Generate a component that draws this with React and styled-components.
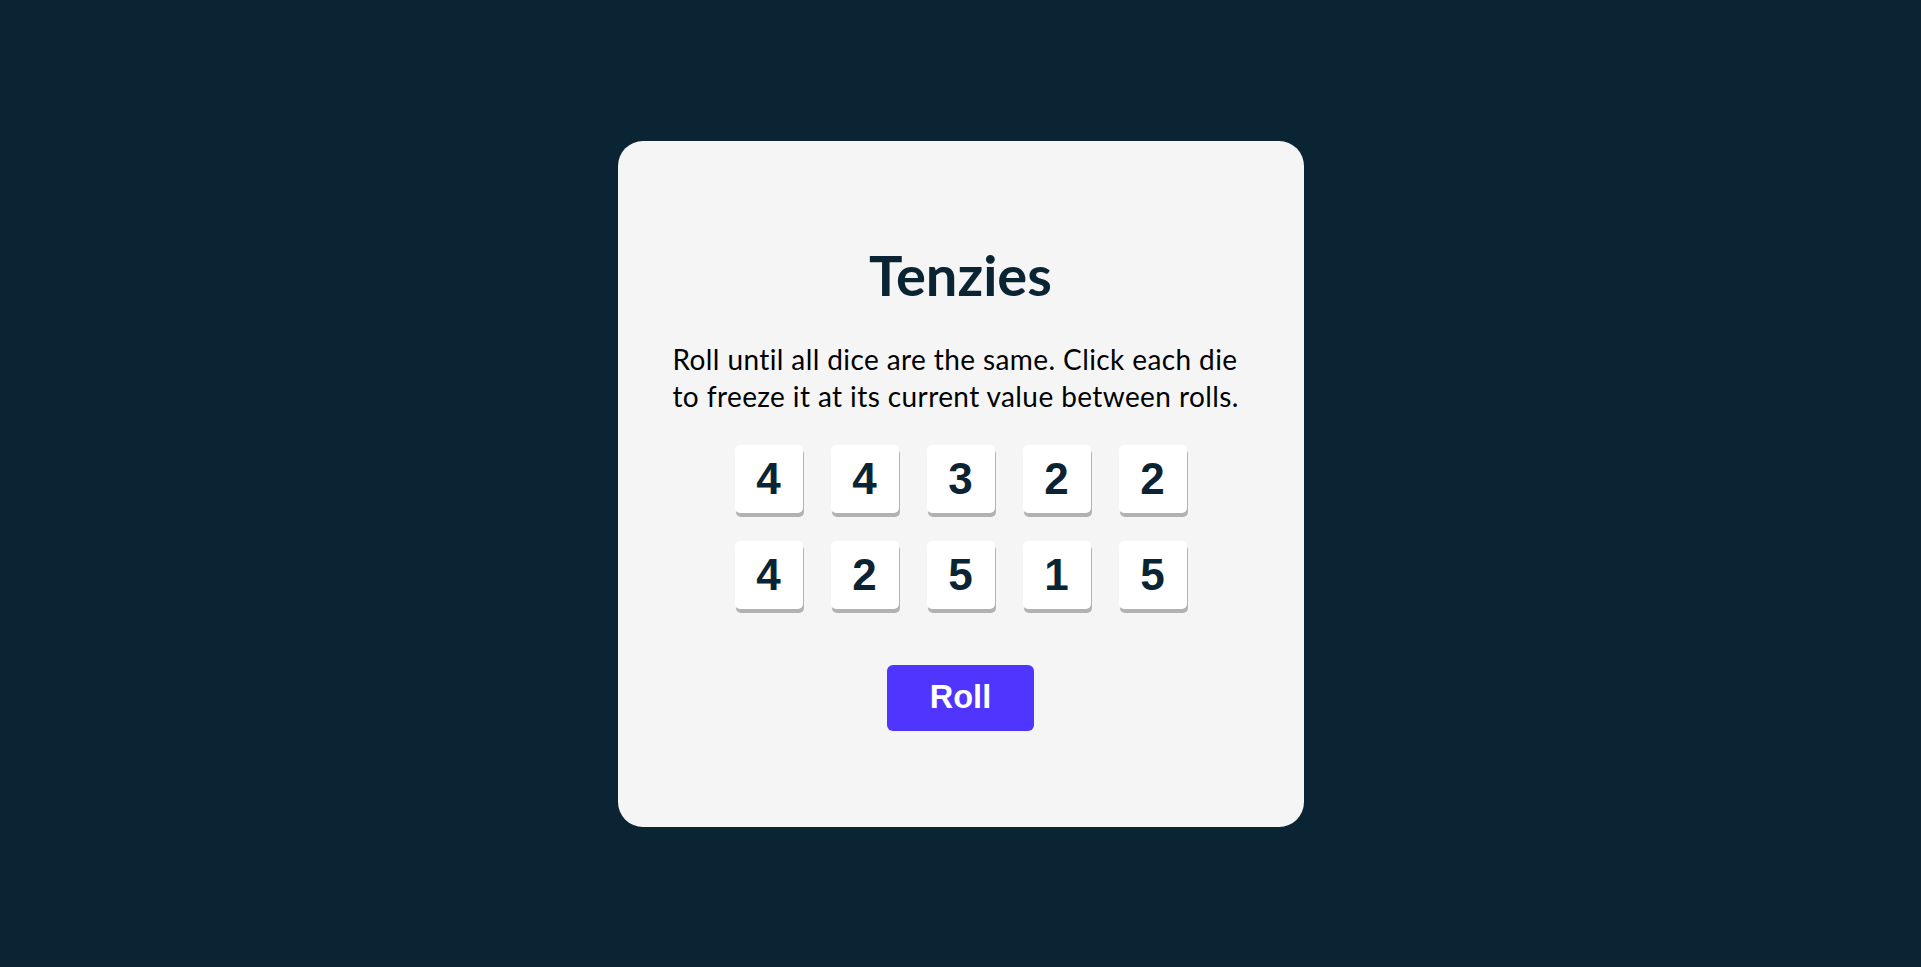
import React, { useState } from "react";
import styled, { createGlobalStyle } from "styled-components";

const GlobalStyle = createGlobalStyle`
  * { box-sizing: border-box; }
  body {
    margin: 0;
    background: #0b2434;
    font-family: "Lato", "Liberation Sans", sans-serif;
  }
`;

const Page = styled.main`
  min-height: 100vh;
  display: flex;
  align-items: center;
  justify-content: center;
`;

const Board = styled.section`
  width: 686px;
  height: 686px;
  background: #f5f5f5;
  border-radius: 25px;
  display: flex;
  flex-direction: column;
  align-items: center;
  padding-top: 106px;
`;

const Title = styled.h1`
  margin: 0;
  font-family: "Lato", sans-serif;
  font-weight: 700;
  font-size: 56px;
  line-height: 56px;
  color: #0b2434;
`;

const Instructions = styled.p`
  align-self: stretch;
  margin: 38px 0 0;
  padding: 0 0 0 55px;
  font-family: "Lato", sans-serif;
  font-size: 28px;
  line-height: 37px;
  letter-spacing: 0.4px;
  color: #000;
`;

const DiceGrid = styled.div`
  margin-top: 30px;
  display: grid;
  grid-template-columns: repeat(5, 68px);
  grid-auto-rows: 68px;
  gap: 28px;
`;

const Die = styled.button`
  border: none;
  padding: 0;
  border-radius: 5px;
  background: ${(p) => (p.$held ? "#59e391" : "#ffffff")};
  box-shadow: 1px 4px 0 #b2b2b2;
  display: flex;
  align-items: center;
  justify-content: center;
  font-family: "Liberation Sans", Arial, sans-serif;
  font-weight: 700;
  font-size: 44px;
  color: #0b2434;
  cursor: pointer;
`;

const RollButton = styled.button`
  margin-top: 56px;
  width: 147px;
  height: 66px;
  border: none;
  border-radius: 6px;
  background: #5035ff;
  color: #ffffff;
  font-family: "Liberation Sans", Arial, sans-serif;
  font-weight: 700;
  font-size: 32.5px;
  display: flex;
  align-items: center;
  justify-content: center;
  cursor: pointer;
`;

const startDice = [4, 4, 3, 2, 2, 4, 2, 5, 1, 5].map((value, id) => ({
  id,
  value,
  held: false,
}));

export default function App() {
  const [dice, setDice] = useState(startDice);

  function toggle(id) {
    setDice((old) => old.map((d) => (d.id === id ? { ...d, held: !d.held } : d)));
  }

  function roll() {
    setDice((old) =>
      old.map((d) => (d.held ? d : { ...d, value: Math.ceil(Math.random() * 6) }))
    );
  }

  return (
    <>
      <GlobalStyle />
      <Page>
        <Board>
          <Title>Tenzies</Title>
          <Instructions>
            Roll until all dice are the same. Click each die
            <br />
            to freeze it at its current value between rolls.
          </Instructions>
          <DiceGrid>
            {dice.map((d) => (
              <Die key={d.id} $held={d.held} onClick={() => toggle(d.id)}>
                {d.value}
              </Die>
            ))}
          </DiceGrid>
          <RollButton onClick={roll}>Roll</RollButton>
        </Board>
      </Page>
    </>
  );
}
